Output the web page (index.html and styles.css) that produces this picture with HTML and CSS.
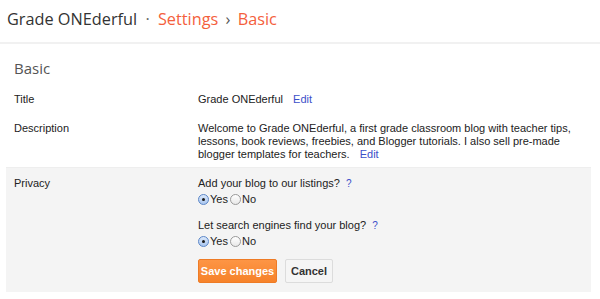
FILE: index.html
```html
<!DOCTYPE html>
<html lang="en">
<head>
    <meta charset="UTF-8">
    <meta name="viewport" content="width=device-width, initial-scale=1.0">
    <title>Settings - Basic</title>
    <link rel="stylesheet" href="styles.css">
</head>
<body>
    <div class="crumbs">
        <span class="blog-name">Grade ONEderful</span>
        <span class="sep">&middot;</span>
        <span class="crumb">Settings</span>
        <span class="arrow">&rsaquo;</span>
        <span class="crumb">Basic</span>
    </div>

    <div class="page">
        <h2 class="section-title">Basic</h2>

        <div class="row row-title">
            <div class="label">Title</div>
            <div class="value">Grade ONEderful <a class="edit" href="#">Edit</a></div>
        </div>

        <div class="row row-desc">
            <div class="label">Description</div>
            <div class="value">Welcome to Grade ONEderful, a first grade classroom blog with teacher tips, lessons, book reviews, freebies, and Blogger tutorials. I also sell pre-made blogger templates for teachers. <a class="edit" href="#">Edit</a></div>
        </div>

        <div class="panel">
            <div class="row">
                <div class="label">Privacy</div>
                <div class="value">
                    <div class="question">Add your blog to our listings? <a class="help" href="#">?</a></div>
                    <div class="choices">
                        <label class="radio"><span class="dot checked"></span>Yes</label>
                        <label class="radio"><span class="dot"></span>No</label>
                    </div>
                    <div class="question second">Let search engines find your blog? <a class="help" href="#">?</a></div>
                    <div class="choices">
                        <label class="radio"><span class="dot checked"></span>Yes</label>
                        <label class="radio"><span class="dot"></span>No</label>
                    </div>
                    <div class="buttons">
                        <button class="btn-save">Save changes</button>
                        <button class="btn-cancel">Cancel</button>
                    </div>
                </div>
            </div>
        </div>
    </div>
</body>
</html>
```

FILE: styles.css
```css
body {
    margin: 0;
    background: #fff;
    font-family: "Liberation Sans", Arial, sans-serif;
    font-size: 11px;
    color: #222;
}
.crumbs {
    height: 44px;
    box-sizing: border-box;
    padding: 8px 7px 0;
    border-bottom: 2px solid #f1f1f1;
    font-family: "Open Sans", sans-serif;
    font-size: 16.3px;
    line-height: 22px;
    white-space: nowrap;
}
.blog-name {
    color: #333;
}
.sep {
    color: #666;
    margin: 0 4px;
}
.crumb {
    color: #f4603c;
}
.arrow {
    color: #555;
    margin: 0 3px;
}
.page {
    margin: 0 9px 0 6px;
}
.section-title {
    margin: 14px 0 0 8px;
    font-family: "Open Sans", sans-serif;
    font-weight: normal;
    font-size: 15px;
    line-height: 20px;
    color: #555;
}
.row {
    display: flex;
    padding: 0 8px;
    line-height: 13px;
}
.label {
    width: 184px;
    flex: none;
}
.value {
    flex: 1;
}
.row-title {
    margin-top: 15px;
}
.row-desc {
    margin-top: 16px;
}
.edit {
    color: #3b4fc9;
    text-decoration: none;
    margin-left: 7px;
}
.panel {
    margin-top: 6px;
    padding: 9px 0 9px;
    background: #f4f4f4;
    border-top: 1px solid #eee;
}
.question {
    height: 15px;
}
.question.second {
    margin-top: 12px;
}
.help {
    color: #3b4fc9;
    text-decoration: none;
    font-size: 10px;
    margin-left: 3px;
}
.choices {
    display: flex;
    align-items: center;
    gap: 2px;
    height: 15px;
}
.radio {
    display: flex;
    align-items: center;
}
.dot {
    width: 9px;
    height: 9px;
    border: 1px solid #9a9a9a;
    border-radius: 50%;
    background: linear-gradient(#fff, #e8e8e8);
    margin-right: 1px;
    position: relative;
}
.dot.checked {
    border-color: #5b86c8;
    background: linear-gradient(#dbe8fa, #a9c6ef);
}
.dot.checked::after {
    content: "";
    position: absolute;
    left: 3px;
    top: 3px;
    width: 3px;
    height: 3px;
    border-radius: 50%;
    background: #1a1a1a;
}
.buttons {
    display: flex;
    gap: 8px;
    margin-top: 10px;
}
.buttons button {
    height: 24px;
    font-family: "Liberation Sans", Arial, sans-serif;
    font-size: 11px;
    font-weight: bold;
    border-radius: 2px;
    padding: 0;
    white-space: nowrap;
}
.btn-save {
    width: 79px;
    color: #fff;
    background: linear-gradient(#fd9545, #f6822a);
    border: 1px solid #ee7b25;
}
.btn-cancel {
    width: 48px;
    color: #333;
    background: #f5f5f5;
    border: 1px solid #dcdcdc;
}
```
